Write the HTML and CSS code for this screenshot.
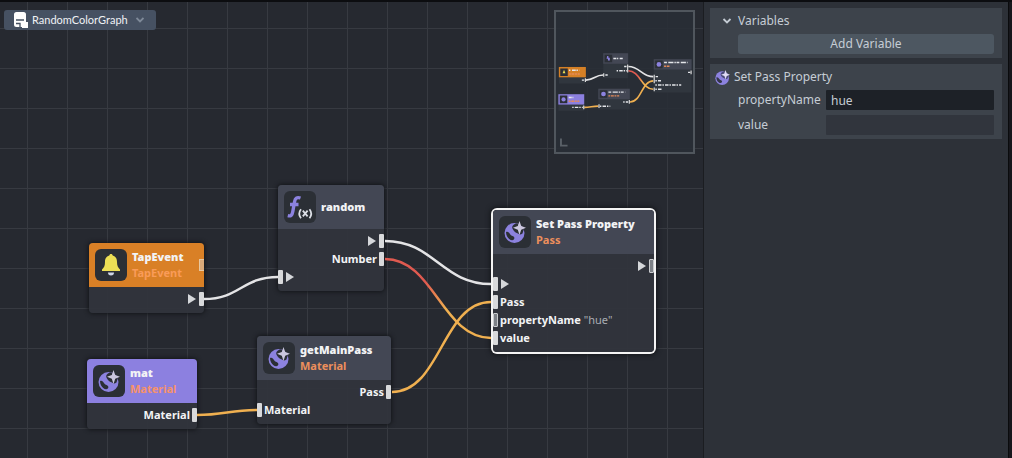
FILE: index.html
```html
<!DOCTYPE html>
<html lang="en">
<head>
<meta charset="utf-8">
<meta name="viewport" content="width=device-width, initial-scale=1">
<title>RandomColorGraph</title>
<link rel="stylesheet" href="styles.css">
</head>
<body>
<svg class="defs" aria-hidden="true">
  <symbol id="sphere" viewBox="0 0 22 22">
    <circle cx="10.500" cy="12" r="10" fill="#8c82df"/>
    <path d="M2 11c2-.8 3 .5 4 2s1.500 1.600 3 2.200 1.800 2.300.8 3.300-3 .8-4.600-.6S2 14.500 2 11z" fill="#2b2f35"/>
    <path d="M8.500 5C10 3 11.500 2.500 13 2.500l7 5-1.500 5c-1.500.8-2.500 1.500-3.500.5s-3.500-1-5-3-2.300-3.500-1.500-5z" fill="#2b2f35"/>
    <path d="M15.500 0l1.700 5L22 6.800 17.200 8.800 15.500 14l-1.700-5.200L9 6.800 13.800 5z" fill="#cbc7de"/>
  </symbol>
  <symbol id="sphere-light" viewBox="0 0 22 22">
    <circle cx="10.500" cy="12" r="10" fill="#8c82df"/>
    <path d="M2 11c2-.8 3 .5 4 2s1.500 1.600 3 2.200 1.800 2.300.8 3.300-3 .8-4.600-.6S2 14.500 2 11z" fill="#35374a"/>
    <path d="M8.500 5C10 3 11.500 2.500 13 2.500l7 5-1.500 5c-1.500.8-2.500 1.500-3.500.5s-3.500-1-5-3-2.300-3.500-1.500-5z" fill="#4a4a78"/>
    <path d="M15.500 0l1.700 5L22 6.800 17.200 8.800 15.500 14l-1.700-5.200L9 6.800 13.800 5z" fill="#e0dcf4"/>
  </symbol>
</svg>
<div class="app">
  <main class="canvas">
    <button class="graph-picker" type="button">
      <svg width="14" height="16" viewBox="0 0 14 16" aria-hidden="true">
        <path d="M2.500 0h7A2.500 2.500 0 0 1 12 2.500V10h2v6H8v-1H2.500A2.500 2.500 0 0 1 0 12.500v-10A2.500 2.500 0 0 1 2.500 0z" fill="#fff"/>
        <path d="M2 8h8M2 11.500h4V15" fill="none" stroke="#465162" stroke-width="1.300"/>
      </svg>
      <span>RandomColorGraph</span>
      <svg width="8" height="6" viewBox="0 0 8 6" aria-hidden="true"><path d="M.5 1L4 4.500 7.500 1" fill="none" stroke="#7f8a99" stroke-width="1.800"/></svg>
    </button>

    <section class="node node-tap">
      <header class="node-head head-orange">
        <span class="icon"><svg width="20" height="24" viewBox="0 0 20 24" aria-hidden="true"><path d="M10 1c1 0 1.600.7 1.700 1.600C15 3.500 16 6 16 9c0 4 1 5.500 3 7.500v1.500H1v-1.500c2-2 3-3.500 3-7.500 0-3 1-5.500 4.300-6.400C8.400 1.700 9 1 10 1z" fill="#ecdf55"/><path d="M7 19.500h6a3 3 0 0 1-6 0z" fill="#cfd6e6"/></svg></span>
        <span class="titles"><strong>TapEvent</strong><em class="on-orange">TapEvent</em></span>
        <i class="head-port"></i>
      </header>
      <div class="node-body">
        <div class="row out"><i class="play"></i><i class="port"></i></div>
      </div>
    </section>

    <section class="node node-mat">
      <header class="node-head head-purple">
        <span class="icon"><svg width="22" height="22" aria-hidden="true"><use href="#sphere"/></svg></span>
        <span class="titles"><strong>mat</strong><em>Material</em></span>
      </header>
      <div class="node-body">
        <div class="row out"><span>Material</span><i class="port"></i></div>
      </div>
    </section>

    <section class="node node-random">
      <header class="node-head">
        <span class="icon"><svg width="32" height="32" viewBox="0 0 32 32" aria-hidden="true">
          <path d="M16.500 7c-3.800-1.200-5.300.4-5.900 3.500L8.800 20.500c-.6 3.400-1.800 5-5 4.200M6 13.500h8.500" fill="none" stroke="#8c82df" stroke-width="3.400"/>
          <path d="M17 18.300q-3.500 4.500 0 9M25.500 18.300q3.500 4.500 0 9M18.800 19.700l4.800 5.600M23.600 19.700L18.800 25.300" fill="none" stroke="#dcdfe6" stroke-width="1.800"/></svg></span>
        <span class="titles"><strong>random</strong></span>
      </header>
      <div class="node-body">
        <div class="row out"><i class="play"></i><i class="port"></i></div>
        <div class="row out"><span>Number</span><i class="port"></i></div>
        <div class="row"><i class="port"></i><i class="play"></i></div>
      </div>
    </section>

    <section class="node node-main">
      <header class="node-head">
        <span class="icon"><svg width="22" height="22" aria-hidden="true"><use href="#sphere"/></svg></span>
        <span class="titles"><strong>getMainPass</strong><em>Material</em></span>
      </header>
      <div class="node-body">
        <div class="row out"><span>Pass</span><i class="port"></i></div>
        <div class="row"><i class="port"></i><span>Material</span></div>
      </div>
    </section>

    <section class="node node-set selected">
      <header class="node-head">
        <span class="icon"><svg width="22" height="22" aria-hidden="true"><use href="#sphere"/></svg></span>
        <span class="titles"><strong>Set Pass Property</strong><em>Pass</em></span>
      </header>
      <div class="node-body">
        <div class="row out"><i class="play"></i><i class="port open"></i></div>
        <div class="row"><i class="port"></i><i class="play"></i></div>
        <div class="row"><i class="port"></i><span>Pass</span></div>
        <div class="row"><i class="port open"></i><span>propertyName <b class="literal">"hue"</b></span></div>
        <div class="row"><i class="port"></i><span>value</span></div>
      </div>
    </section>

    <svg class="wires" width="703" height="456" viewBox="0 2 703 456" aria-hidden="true">
      <defs>
        <linearGradient id="heat" gradientUnits="userSpaceOnUse" x1="385" y1="259" x2="491" y2="338">
          <stop offset=".35" stop-color="#e05a50"/><stop offset=".6" stop-color="#f0b050"/>
        </linearGradient>
      </defs>
      <g id="links" fill="none">
        <path d="M204 299C240 299 242 277 278 277" stroke="#e4e4e6"/>
        <path d="M385 241C434 241 442 284 491 284" stroke="#e4e4e6"/>
        <path d="M385 259C434 259 442 338 491 338" stroke="url(#heat)"/>
        <path d="M392 392C441 392 442 302 491 302" stroke="#f0b050"/>
        <path d="M197 415C224 415 230 410 257 410" stroke="#f0b050"/>
      </g>
    </svg>

    <svg class="minimap" viewBox="77 9 583 596" role="img" aria-label="Graph overview">
      <g fill="#30363e">
        <path d="M89 243h115v70H89zM87 359h110v70H87zM278 185h106v106H278zM257 336h134v88H257zM493 210h161v142H493z"/>
      </g>
      <g fill="#434754"><path d="M278 185h106v44H278zM257 336h134v44H257zM493 210h161v44H493z"/></g>
      <path d="M89 243h115v44H89z" fill="#d58026"/>
      <path d="M87 359h110v44H87z" fill="#8c80e0"/>
      <g fill="#2b2f36"><path d="M95 249h32v32H95zM93 365h32v32H93zM284 191h32v32h-32zM263 342h32v32h-32zM499 216h32v32h-32z"/></g>
      <g fill="#8c82df"><circle cx="109" cy="381" r="9"/><circle cx="279" cy="358" r="10"/><circle cx="515" cy="232" r="10"/><path d="M295 196h5v8h6v12h-8v-8h-6z"/></g>
      <path d="M111 255l6 15h-12z" fill="#ecdf55"/>
      <use href="#links" stroke-width="7"/>
      <g fill="none" stroke="#e4e6ea" stroke-width="6">
        <path d="M132 257h46" stroke-dasharray="6 7 16 3"/><path d="M131 373h20M321 207h42" stroke-dasharray="13 3 5 6"/>
        <path d="M300 350h72M537 224h100" stroke-dasharray="12 6 22 4 6 3"/>
        <path d="M335 259h44M146 415h45M363 392h21M264 410h44M500 302h24M500 320h110M500 338h26" stroke-dasharray="6 5 15 4"/>
        <path d="M187 299h10M367 241h10M287 277h10M639 266h10M501 284h10"/>
      </g>
      <g fill="none" stroke="#e58a58" stroke-width="6"><path d="M132 273h46M131 389h45M300 366h46M537 240h24" stroke-dasharray="8 3 12 3"/></g>
      <path d="M202 291v16M382 233v34M280 270v15M389 384v16M260 402v16M195 407v16M495 276v36M495 330v16M652 258v16" stroke="#ddd" stroke-width="5"/>
      <path d="M98 548v30h28" fill="none" stroke="#5a6168" stroke-width="8"/>
    </svg>
  </main>

  <aside class="sidebar">
    <section class="panel">
      <h2 class="panel-title"><svg width="10" height="6" viewBox="0 0 10 6" aria-hidden="true"><path d="M1.500 1L5 4.500 8.500 1" fill="none" stroke="#c4cbd3" stroke-width="1.800"/></svg>Variables</h2>
      <button class="add" type="button">Add Variable</button>
    </section>
    <section class="panel props">
      <h2 class="props-title"><svg width="15" height="15" aria-hidden="true"><use href="#sphere-light"/></svg>Set Pass Property</h2>
      <div class="field"><label for="pname">propertyName</label><input id="pname" type="text" value="hue"></div>
      <div class="field"><label for="pvalue">value</label><input id="pvalue" type="text" disabled></div>
    </section>
  </aside>
</div>
</body>
</html>
```
FILE: styles.css
```css
* { box-sizing: border-box; }
body {
  margin: 0;
  background: #17171c;
  color: #c6cdd5;
  font: 12px/16px "Noto Sans", "Open Sans", sans-serif;
}
button, input { font: inherit; color: inherit; margin: 0; }
h2 { margin: 0; font-size: 12px; font-weight: 400; }
.defs { position: absolute; width: 0; height: 0; }
.app {
  display: flex;
  min-height: 100vh;
  border-top: 2px solid #0c0d10;
  padding-right: 3px;
}

.canvas {
  position: relative;
  flex: 1;
  min-width: 0;
  overflow: hidden;
  border-right: 1px solid #1b1d21;
  background-color: #262930;
  background-image:
    linear-gradient(to right, #373a41 1px, transparent 1px),
    linear-gradient(to bottom, #373a41 1px, transparent 1px);
  background-size: 40px 40px;
  background-position: 27px 26px;
}
.graph-picker {
  display: flex;
  align-items: center;
  gap: 4px;
  height: 20px;
  margin: 8px 4px;
  padding: 0 12px 0 10px;
  border: 0;
  border-radius: 3px;
  background: #465162;
  color: #f0f2f5;
  font-family: Lato, "Noto Sans", sans-serif;
  font-size: 11px;
}
.graph-picker span { margin-right: 4px; }

.node {
  position: absolute;
  border-radius: 4px;
  background: #30343cf2;
  box-shadow: 0 0 4px 1px #14161a;
  color: #f2f3f5;
  font-size: 11px;
  font-weight: 700;
}
.node-tap { left: 89px; top: 241px; width: 115px; }
.node-mat { left: 87px; top: 357px; width: 110px; }
.node-random { left: 278px; top: 183px; width: 106px; }
.node-main { left: 257px; top: 334px; width: 134px; }
.node-set { left: 493px; top: 208px; width: 161px; }
.selected { box-shadow: 0 0 0 2px #f4f4f4, 0 0 5px 3px #14161a; }
.node-head {
  display: flex;
  align-items: center;
  gap: 5px;
  height: 44px;
  padding-left: 6px;
  border-radius: 4px 4px 0 0;
  background: #434754;
}
.head-orange { background: #d98026; }
.head-purple { background: #8c80e0; }
.icon {
  display: flex;
  align-items: center;
  justify-content: center;
  flex: none;
  width: 32px;
  height: 32px;
  border-radius: 6px;
  background: #2b2f35;
}
.titles { display: flex; flex-direction: column; white-space: nowrap; }
.titles em { font-style: normal; color: #ed8f5c; }
.titles .on-orange { color: #f99b58; }
.head-purple em { color: #f6926a; }
.head-port {
  width: 5px;
  height: 12px;
  margin-left: auto;
  border: 1px solid #e8c8a0;
  border-right: 0;
  background: #d9a878;
}
.node-body { padding: 3px 0 5px; }
.row { display: flex; align-items: center; gap: 2px; height: 18px; white-space: nowrap; }
.out { justify-content: flex-end; }
.port { width: 5px; height: 14px; border-radius: 1px; background: #d8d9db; }
.open { border: 1px solid #c9cbce; background: #7d8187; }
.play {
  width: 8px;
  height: 10px;
  margin: 0 1px;
  background: #d5d7da;
  clip-path: polygon(0 0, 100% 50%, 0 100%);
}
.literal { color: #a9adb3; font-weight: 400; }
.wires { position: absolute; left: 0; top: 0; stroke-width: 2.5px; pointer-events: none; }
.minimap {
  position: absolute;
  top: 8px;
  right: 8px;
  width: 141px;
  height: 144px;
  border: 2px solid #50565d;
  background: #292e35e0;
}

.sidebar {
  display: flex;
  flex-direction: column;
  flex: none;
  gap: 6px;
  width: 305px;
  padding: 6px;
  border-right: 1px solid #0a0b0d;
  background: #2d3138;
}
.panel { padding: 4px 8px 4px 12px; background: #3d434b; }
.panel-title { display: flex; align-items: center; gap: 6px; height: 17px; }
.add {
  display: block;
  width: calc(100% - 16px);
  height: 20px;
  margin: 5px 0 0 16px;
  padding: 0;
  border: 0;
  border-radius: 3px;
  background: #4d5761;
}
.props { padding-left: 5px; }
.props-title { display: flex; align-items: center; gap: 4px; height: 18px; }
.field { display: flex; align-items: center; margin: 4px 0 0 23px; }
.field + .field { margin-top: 5px; }
.field label { flex: none; width: 88px; }
.field input {
  flex: 1;
  min-width: 0;
  height: 20px;
  padding: 0 5px;
  border: 0;
  border-radius: 1px;
  background: #1d2127;
}
.field input:disabled { background: #31353d; }
```
